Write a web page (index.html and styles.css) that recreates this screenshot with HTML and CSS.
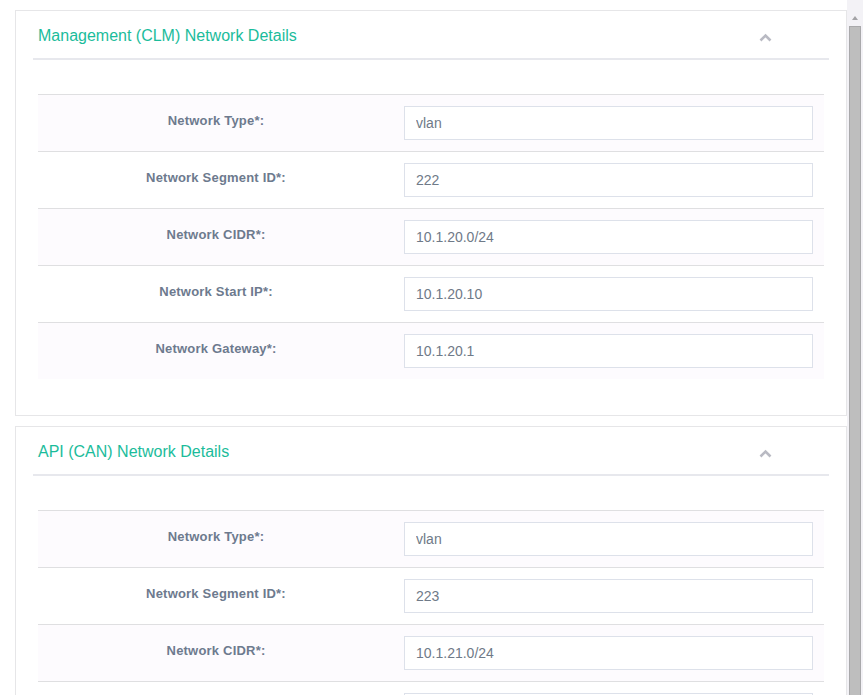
FILE: index.html
```html
<!DOCTYPE html>
<html lang="en">
<head>
<meta charset="utf-8">
<title>Network Details</title>
<link rel="stylesheet" href="styles.css">
</head>
<body>
<div class="screen">
  <main class="content">
    <section class="panel">
      <header class="panel-head">
        <h2 class="panel-title">Management (CLM) Network Details</h2>
        <svg class="chevron" width="13" height="9" viewBox="0 0 13 9"><polyline points="1.5,7.5 6.5,2.5 11.5,7.5" fill="none" stroke="#b9bac3" stroke-width="2.6"/></svg>
      </header>
      <div class="table">
        <div class="row alt"><div class="label">Network Type*:</div><div class="field"><input class="input" type="text" value="vlan"></div></div>
        <div class="row"><div class="label">Network Segment ID*:</div><div class="field"><input class="input" type="text" value="222"></div></div>
        <div class="row alt"><div class="label">Network CIDR*:</div><div class="field"><input class="input" type="text" value="10.1.20.0/24"></div></div>
        <div class="row"><div class="label">Network Start IP*:</div><div class="field"><input class="input" type="text" value="10.1.20.10"></div></div>
        <div class="row alt"><div class="label">Network Gateway*:</div><div class="field"><input class="input" type="text" value="10.1.20.1"></div></div>
      </div>
    </section>
    <section class="panel">
      <header class="panel-head">
        <h2 class="panel-title">API (CAN) Network Details</h2>
        <svg class="chevron" width="13" height="9" viewBox="0 0 13 9"><polyline points="1.5,7.5 6.5,2.5 11.5,7.5" fill="none" stroke="#b9bac3" stroke-width="2.6"/></svg>
      </header>
      <div class="table">
        <div class="row alt"><div class="label">Network Type*:</div><div class="field"><input class="input" type="text" value="vlan"></div></div>
        <div class="row"><div class="label">Network Segment ID*:</div><div class="field"><input class="input" type="text" value="223"></div></div>
        <div class="row alt"><div class="label">Network CIDR*:</div><div class="field"><input class="input" type="text" value="10.1.21.0/24"></div></div>
        <div class="row"><div class="label">Network Start IP*:</div><div class="field"><input class="input" type="text" value="10.1.21.10"></div></div>
        <div class="row alt"><div class="label">Network Gateway*:</div><div class="field"><input class="input" type="text" value="10.1.21.1"></div></div>
      </div>
    </section>
  </main>
  <div class="scrollbar" aria-hidden="true">
    <div class="scroll-btn"><span class="scroll-arrow"></span></div>
    <div class="scroll-thumb"></div>
  </div>
</div>
</body>
</html>
```
FILE: styles.css
```css
html, body {
  margin: 0;
  padding: 0;
  background: #ffffff;
}

body {
  font-family: "Liberation Sans", Arial, sans-serif;
}

.screen {
  display: flex;
  height: 695px;
  overflow: hidden;
}

.content {
  flex: 1;
  min-width: 0;
  padding: 10px 0 0 15px;
  overflow: hidden;
}

.panel {
  border: 1px solid #e6e6e8;
  padding: 0 17px 36px;
  margin-bottom: 10px;
  background: #ffffff;
}

.panel-head {
  display: flex;
  justify-content: space-between;
  align-items: flex-start;
  padding: 15px 0 12px;
  border-bottom: 2px solid #e7e8ed;
}

.panel-title {
  margin: 0;
  padding-left: 5px;
  font-size: 16px;
  line-height: 20px;
  font-weight: normal;
  color: #1bbc9b;
}

.chevron {
  display: block;
  margin-top: 7px;
  margin-right: 57px;
}

.table {
  margin: 34px 5px 0;
}

.row {
  display: grid;
  grid-template-columns: 356px 1fr;
  align-items: center;
  border-top: 1px solid #dfdfe1;
  background: #ffffff;
}

.row.alt {
  background: #fdfbfe;
}

.label {
  text-align: center;
  font-size: 13px;
  font-weight: bold;
  letter-spacing: 0.2px;
  color: #6d7a8e;
  padding-bottom: 5px;
}

.field {
  padding: 11px 11px 11px 10px;
}

.input {
  display: block;
  box-sizing: border-box;
  width: 100%;
  height: 34px;
  margin: 0;
  padding: 0 11px;
  border: 1px solid #dde1ea;
  border-radius: 0;
  background: #ffffff;
  font-family: "Liberation Sans", Arial, sans-serif;
  font-size: 14px;
  color: #6f7a88;
  outline: none;
}

.scrollbar {
  width: 16px;
  flex: none;
  display: flex;
  flex-direction: column;
  background: #f3f2f6;
}

.scroll-btn {
  height: 26px;
  flex: none;
  display: flex;
  justify-content: center;
  padding-top: 16px;
  box-sizing: border-box;
}

.scroll-arrow {
  width: 0;
  height: 0;
  border-left: 3px solid transparent;
  border-right: 3px solid transparent;
  border-bottom: 4px solid #a3a3a6;
}

.scroll-thumb {
  flex: 1;
  margin: 0 2px;
  background: #bebebe;
  border: 1px solid #a9a9ab;
  border-bottom: none;
}
```
